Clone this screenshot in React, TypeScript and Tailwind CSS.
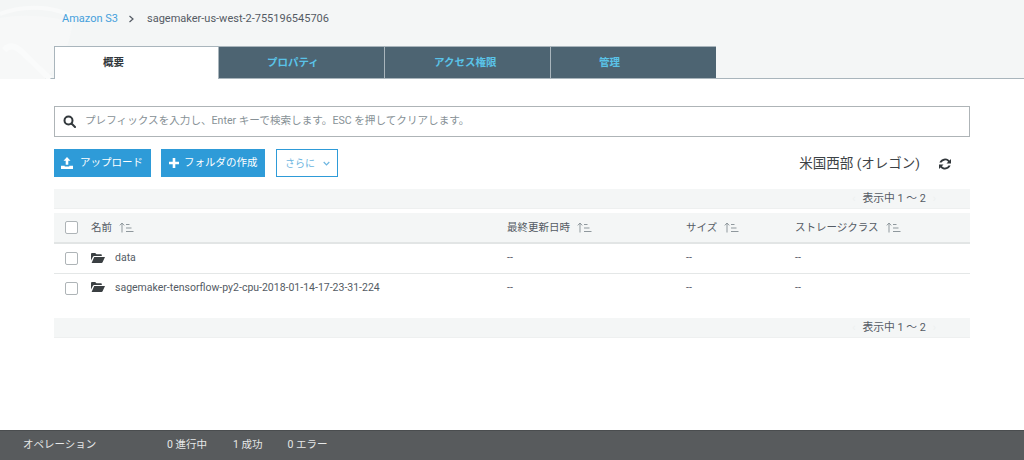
import React from "react";

function SortIcon() {
  return (
    <svg width="15" height="11" viewBox="0 0 15 11" className="ml-[7px] shrink-0" fill="none" stroke="#8f989d" strokeWidth="1">
      <path d="M3 10.500V1M0.800 3.400 3 1l2.200 2.400" />
      <path d="M7 2.500h3.500M7 6h5.500M7 9.500h7.500" />
    </svg>
  );
}

function Checkbox() {
  return <span className="block w-[13px] h-[13px] border border-[#aeb4b7] rounded-[2px] bg-white shrink-0" />;
}

function Folder() {
  return (
    <svg width="14" height="10" viewBox="0 0 14 10" className="shrink-0 mb-[2px]" fill="#3a3f42">
      <path d="M0 1.200C0 .5.500 0 1.200 0h3l1.300 1.300h4.300c.6 0 1 .4 1 1v.7H3.300C2.600 3 2.100 3.300 1.800 3.900L0 7.500z" />
      <path d="M3.200 3.900H14l-2.300 5.200c-.2.500-.6.900-1.200.900H.6z" />
    </svg>
  );
}

function Pager() {
  return (
    <div className="h-[20px] bg-[#f4f6f6] border-b border-[#eef0f0] flex items-center justify-end pr-[34px] pt-[2px] text-[10.8px] text-[#545b64]">
      <span className="text-[#edf0f0] mr-[7px]">‹</span>
      表示中 1 ～ 2
      <span className="text-[#edf0f0] ml-[7px]">›</span>
    </div>
  );
}

function Row({ name, border, h, cell }: { name: string; border?: boolean; h: string; cell?: string }) {
  return (
    <div className={`${h} flex items-center text-[10.5px] text-[#545b64] ${border ? "border-b border-[#e4e7e7]" : ""}`}>
      <div className="w-[37px] pl-[11px] shrink-0 flex"><Checkbox /></div>
      <div className="w-[416px] shrink-0 flex items-center">
        <Folder />
        <span className={`ml-[10px] ${cell ?? ""}`}>{name}</span>
      </div>
      <div className={`w-[179px] shrink-0 ${cell ?? ""}`}>--</div>
      <div className={`w-[109px] shrink-0 ${cell ?? ""}`}>--</div>
      <div className={cell}>--</div>
    </div>
  );
}

function Head({ label, w }: { label: string; w: string }) {
  return (
    <div className={`${w} shrink-0 flex items-center`}>
      <span>{label}</span>
      <SortIcon />
    </div>
  );
}

export default function App() {
  return (
    <div className="w-[1024px] h-[460px] overflow-hidden bg-white flex flex-col font-['Roboto','Noto_Sans_CJK_JP',sans-serif]">
      <header className="relative h-[79px] shrink-0 bg-[#f4f6f6] border-b border-[#a9b5bc]">
        <svg className="absolute left-0 top-0" width="90" height="79" viewBox="0 0 90 79" fill="none">
          <path d="M0 18C25 13 55 17 72 22C72 40 62 62 45 79H0Z" fill="#f7f8f8" />
          <path d="M0 14C25 4 60 6 75 20" stroke="#f9fafa" strokeWidth="4" />
          <path d="M4 50C10 44 16 46 22 52L50 79" stroke="#fafbfb" strokeWidth="6" />
        </svg>
        <div className="relative h-[46px] pl-[62px] pt-[11px] flex items-start text-[11px] leading-[16px]">
          <span className="text-[#44a0dc]">Amazon S3</span>
          <svg width="7" height="8" viewBox="0 0 7 8" className="ml-[10px] mt-[4px]" fill="none" stroke="#545b64" strokeWidth="1.200">
            <path d="M1.500 1l3.500 3-3.500 3" />
          </svg>
          <span className="ml-[12px] text-[#545b64]">sagemaker-us-west-2-755196545706</span>
        </div>
        <nav className="relative flex ml-[54px] h-[33px] text-[10.5px] font-bold">
          <div className="w-[165px] h-[33px] bg-white border border-b-0 border-[#a9b5bc] flex items-center pl-[48px] text-[#32383c]">概要</div>
          <div className="w-[166px] h-[32px] bg-[#4d6472] border-t border-r border-[#a9b5bc] flex items-center pl-[48px] text-[#5ac3e8]">プロパティ</div>
          <div className="w-[166px] h-[32px] bg-[#4d6472] border-t border-r border-[#a9b5bc] flex items-center pl-[49px] text-[#5ac3e8]">アクセス権限</div>
          <div className="w-[165px] h-[32px] bg-[#4d6472] border-t border-[#a9b5bc] flex items-center pl-[48px] text-[#5ac3e8]">管理</div>
        </nav>
      </header>

      <main className="flex-1 px-[54px] pt-[27px]">
        <div className="h-[31px] border border-[#aeb4b7] flex items-center pl-[8px] text-[10.6px] text-[#879196]">
          <svg width="13" height="13" viewBox="0 0 13 13" fill="none" stroke="#32383c" strokeWidth="2" className="shrink-0">
            <circle cx="5.500" cy="5.500" r="4" />
            <path d="M8.500 8.500L12 12" strokeLinecap="round" />
          </svg>
          <span className="ml-[9px] mb-[2px]">プレフィックスを入力し、Enter キーで検索します。ESC を押してクリアします。</span>
        </div>

        <div className="mt-[12px] flex items-center h-[28px] text-[10.5px]">
          <button className="w-[97px] h-[28px] bg-[#2e9bd8] text-white flex items-center pl-[7px]">
            <svg width="12" height="12" viewBox="0 0 12 12" fill="white" className="shrink-0">
              <path d="M6 0l3.500 3.800H7.300v4H4.700v-4H2.500z" />
              <path d="M0 8.800h3.700v.6h4.600v-.6H12V12H0z" />
            </svg>
            <span className="ml-[7px]">アップロード</span>
          </button>
          <button className="ml-[10px] w-[104px] h-[28px] bg-[#2e9bd8] text-white flex items-center pl-[8px]">
            <svg width="10" height="10" viewBox="0 0 10 10" fill="white" className="shrink-0">
              <path d="M3.700 0h2.600v3.700H10v2.600H6.300V10H3.700V6.300H0V3.700h3.700z" />
            </svg>
            <span className="ml-[5px]">フォルダの作成</span>
          </button>
          <button className="ml-[11px] w-[62px] h-[28px] bg-white border border-[#2e9bd8] text-[10px] text-[#6cb5e0] flex items-center pl-[8px]">
            さらに
            <svg width="7" height="5" viewBox="0 0 7 5" className="ml-[8px]" fill="none" stroke="#6cb5e0" strokeWidth="1.200">
              <path d="M.7 1l2.800 2.800L6.300 1" />
            </svg>
          </button>
          <span className="ml-auto text-[13.500px] text-[#3c4246]">米国西部 (オレゴン)</span>
          <svg width="12" height="12" viewBox="0 0 24 24" className="ml-[19px] mr-[19px] mt-[2px]" fill="#32383c">
            <path d="M24 2v9h-9l3.300-3.300A8 8 0 0 0 5 9H.8A12 12 0 0 1 21 5z" />
            <path d="M0 22v-9h9l-3.300 3.300A8 8 0 0 0 19 15h4.200A12 12 0 0 1 3 19z" />
          </svg>
        </div>

        <div className="mt-[12px]"><Pager /></div>

        <div className="mt-[4px] h-[31px] bg-[#f4f6f6] border-b-2 border-[#e2e5e5] flex items-center text-[10.5px] text-[#545b64]">
          <div className="w-[37px] pl-[11px] shrink-0 flex"><Checkbox /></div>
          <Head label="名前" w="w-[416px]" />
          <Head label="最終更新日時" w="w-[179px]" />
          <Head label="サイズ" w="w-[109px]" />
          <Head label="ストレージクラス" w="w-[150px]" />
        </div>
        <Row name="data" border h="h-[30px]" cell="mb-[2px]" />
        <Row name="sagemaker-tensorflow-py2-cpu-2018-01-14-17-23-31-224" h="h-[28px]" />

        <div className="mt-[16px]"><Pager /></div>
      </main>

      <footer className="h-[30px] shrink-0 bg-[#585b5d] border-t border-[#4a4d4f] flex items-center pl-[23px] pb-[2px] text-[10.5px] text-[#e6e8e8]">
        <span className="w-[144px]">オペレーション</span>
        <span>0 進行中</span>
        <span className="ml-[26px]">1 成功</span>
        <span className="ml-[25px]">0 エラー</span>
      </footer>
    </div>
  );
}
